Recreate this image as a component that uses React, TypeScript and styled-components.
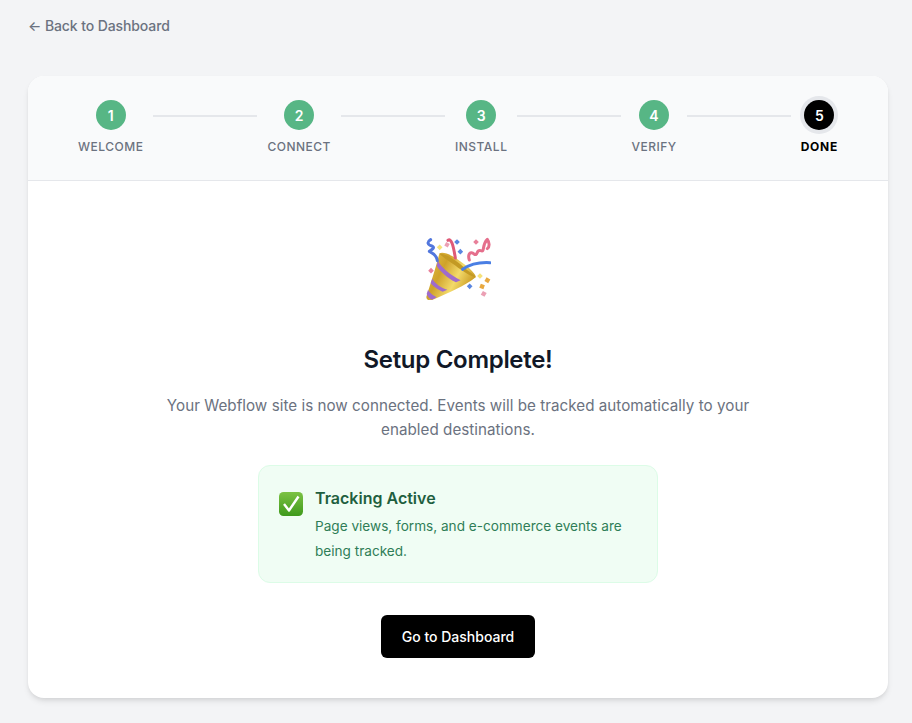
import React from 'react';
import styled, { createGlobalStyle } from 'styled-components';

const GlobalStyle = createGlobalStyle`
  html, body {
    margin: 0;
    background: #f3f4f6;
    font-family: Inter, "Liberation Sans", sans-serif;
    -webkit-font-smoothing: antialiased;
  }
`;

const Page = styled.div`
  min-height: 723px;
  box-sizing: border-box;
  padding: 16px 24px 25px 28px;
`;

const BackLink = styled.a`
  display: block;
  height: 60px;
  line-height: 20px;
  font-size: 14px;
  letter-spacing: -0.1px;
  font-weight: 500;
  color: #6b7280;
  text-decoration: none;
`;

const Card = styled.div`
  background: #fff;
  border-radius: 16px;
  box-shadow: 0 4px 6px -1px rgba(0, 0, 0, 0.1), 0 2px 4px -1px rgba(0, 0, 0, 0.06);
  overflow: hidden;
`;

const Stepper = styled.div`
  display: flex;
  align-items: flex-start;
  height: 80px;
  padding: 24px 50px 0;
  background: #f9fafb;
  border-bottom: 1px solid #e5e7eb;
`;

const Step = styled.div`
  display: flex;
  flex-direction: column;
  align-items: center;
  gap: 9px;
`;

const Circle = styled.div<{ $current?: boolean }>`
  width: 30px;
  height: 30px;
  border-radius: 50%;
  display: flex;
  align-items: center;
  justify-content: center;
  font-size: 14px;
  font-weight: 600;
  color: #fff;
  background: ${(p) => (p.$current ? '#000' : '#57b685')};
  box-shadow: ${(p) => (p.$current ? '0 0 0 4px #e5e7eb' : 'none')};
`;

const StepLabel = styled.div<{ $current?: boolean }>`
  font-size: 12px;
  line-height: 16px;
  letter-spacing: ${(p) => (p.$current ? '0.75px' : '0.5px')};
  font-weight: ${(p) => (p.$current ? 700 : 500)};
  color: ${(p) => (p.$current ? '#000' : '#6b7280')};
`;

const Connector = styled.div`
  flex: 1;
  height: 2px;
  margin: 15px 10px 0;
  background: #e5e7eb;
`;

const Body = styled.div`
  display: flex;
  flex-direction: column;
  align-items: center;
  padding: 56px 40px 40px;
`;

const Title = styled.h1`
  margin: 44px 0 18px;
  font-size: 24px;
  line-height: 32px;
  letter-spacing: -0.3px;
  font-weight: 600;
  color: #111827;
`;

const Description = styled.p`
  margin: 0;
  width: 600px;
  text-align: center;
  font-size: 15.2px;
  letter-spacing: 0.03px;
  line-height: 24px;
  color: #6b7280;
`;

const Notice = styled.div`
  box-sizing: border-box;
  width: 400px;
  height: 118px;
  margin: 23px 0 32px;
  padding: 20px;
  display: flex;
  gap: 12px;
  background: #f0fdf4;
  border: 1px solid #dcfce7;
  border-radius: 12px;
`;

const NoticeIcon = styled.svg`
  flex: none;
  width: 24px;
  height: 24px;
  margin-top: 6px;
`;

const NoticeTitle = styled.div`
  font-size: 16px;
  line-height: 24px;
  font-weight: 600;
  color: #1f5f3f;
`;

const NoticeText = styled.div`
  margin-top: 4px;
  font-size: 13.6px;
  line-height: 25px;
  color: #2f7d57;
`;

const PrimaryButton = styled.button`
  width: 154px;
  height: 43px;
  border: none;
  border-radius: 6px;
  background: #000;
  color: #fff;
  font-family: inherit;
  font-size: 14px;
  font-weight: 500;
`;

const steps = ['WELCOME', 'CONNECT', 'INSTALL', 'VERIFY', 'DONE'];

const PartyPopper = () => (
  <svg width="66.67" height="63.33" viewBox="45 35 200 190" aria-hidden="true">
    <defs>
      <linearGradient id="cone" x1="0" y1="0" x2="1" y2="0.5">
        <stop offset="0" stopColor="#e8c64a" />
        <stop offset="0.4" stopColor="#cfa22a" />
        <stop offset="0.7" stopColor="#f3da6a" />
        <stop offset="1" stopColor="#c99a22" />
      </linearGradient>
    </defs>
    <path d="M88 85 C78 125 60 180 49 215 C50 227 62 227 72 222 C112 204 165 182 197 156 C200 146 170 120 140 100 C118 86 96 78 88 85Z" fill="url(#cone)" />
    <path d="M88 85 C100 82 135 102 160 124 C178 140 196 150 197 156 C184 154 160 140 135 120 C112 104 94 92 88 85Z" fill="#c39a24" />
    <path d="M84 107 C94 126 122 150 152 165 L138 171 C112 158 90 138 80 121Z" fill="#9f6bcc" />
    <path d="M67 160 C74 174 94 188 112 193 L98 199 C82 192 68 182 62 173Z" fill="#9f6bcc" />
    <path d="M54 194 C60 204 72 212 80 216 L66 223 C58 220 52 212 50 206Z" fill="#9f6bcc" />
    <g fill="none" strokeLinecap="round" strokeLinejoin="round">
      <path d="M62 43 C50 50 52 58 66 62 C78 68 62 74 58 78 C66 82 80 88 82 106" stroke="#5277dd" strokeWidth="9" />
      <path d="M114 45 C124 38 130 60 136 98" stroke="#df5a78" strokeWidth="9" />
      <path d="M178 104 C172 86 182 76 192 86 C204 94 198 72 212 76 C226 82 214 60 232 42 C238 50 240 64 232 70" stroke="#e56f8c" strokeWidth="9" />
      <path d="M158 132 C178 118 204 110 240 112" stroke="#4a7fe4" strokeWidth="9" />
    </g>
    <rect x="83" y="60" width="12" height="12" fill="#f6e27a" transform="rotate(45 89 66)" />
    <rect x="105" y="52" width="12" height="12" fill="#eba0b4" transform="rotate(30 111 58)" />
    <rect x="135" y="44" width="12" height="12" fill="#5a86e0" transform="rotate(45 141 50)" />
    <rect x="145" y="73" width="12" height="12" fill="#5a86e0" transform="rotate(45 151 79)" />
    <rect x="192" y="44" width="12" height="12" fill="#e8809a" transform="rotate(45 198 50)" />
    <rect x="57" y="130" width="12" height="12" fill="#e8809a" transform="rotate(45 63 136)" />
    <rect x="204" y="146" width="12" height="12" fill="#f6e27a" transform="rotate(45 210 152)" />
    <rect x="226" y="158" width="13" height="13" fill="#e8a840" transform="rotate(30 232 164)" />
    <rect x="173" y="177" width="12" height="12" fill="#5a86e0" transform="rotate(45 179 183)" />
    <rect x="210" y="177" width="13" height="13" fill="#e8a840" transform="rotate(20 216 183)" />
    <rect x="215" y="199" width="13" height="13" fill="#eba0b4" transform="rotate(30 221 205)" />
  </svg>
);

const CheckBadge = () => (
  <NoticeIcon viewBox="0 0 24 24" aria-hidden="true">
    <defs>
      <linearGradient id="badge" x1="0" y1="0" x2="0" y2="1">
        <stop offset="0" stopColor="#7cc244" />
        <stop offset="1" stopColor="#3f9a1c" />
      </linearGradient>
    </defs>
    <rect x="0" y="0" width="24" height="24" rx="4.5" fill="url(#badge)" />
    <path d="M5 12 L10 18.5 L19.5 4.5" fill="none" stroke="#fff" strokeWidth="2.4" strokeLinejoin="round" />
  </NoticeIcon>
);

export default function App() {
  return (
    <Page>
      <GlobalStyle />
      <BackLink href="#">← Back to Dashboard</BackLink>
      <Card>
        <Stepper>
          {steps.map((label, i) => (
            <React.Fragment key={label}>
              {i > 0 && <Connector />}
              <Step>
                <Circle $current={i === steps.length - 1}>{i + 1}</Circle>
                <StepLabel $current={i === steps.length - 1}>{label}</StepLabel>
              </Step>
            </React.Fragment>
          ))}
        </Stepper>
        <Body>
          <PartyPopper />
          <Title>Setup Complete!</Title>
          <Description>
            Your Webflow site is now connected. Events will be tracked automatically to your enabled destinations.
          </Description>
          <Notice>
            <CheckBadge />
            <div>
              <NoticeTitle>Tracking Active</NoticeTitle>
              <NoticeText>Page views, forms, and e-commerce events are being tracked.</NoticeText>
            </div>
          </Notice>
          <PrimaryButton>Go to Dashboard</PrimaryButton>
        </Body>
      </Card>
    </Page>
  );
}
